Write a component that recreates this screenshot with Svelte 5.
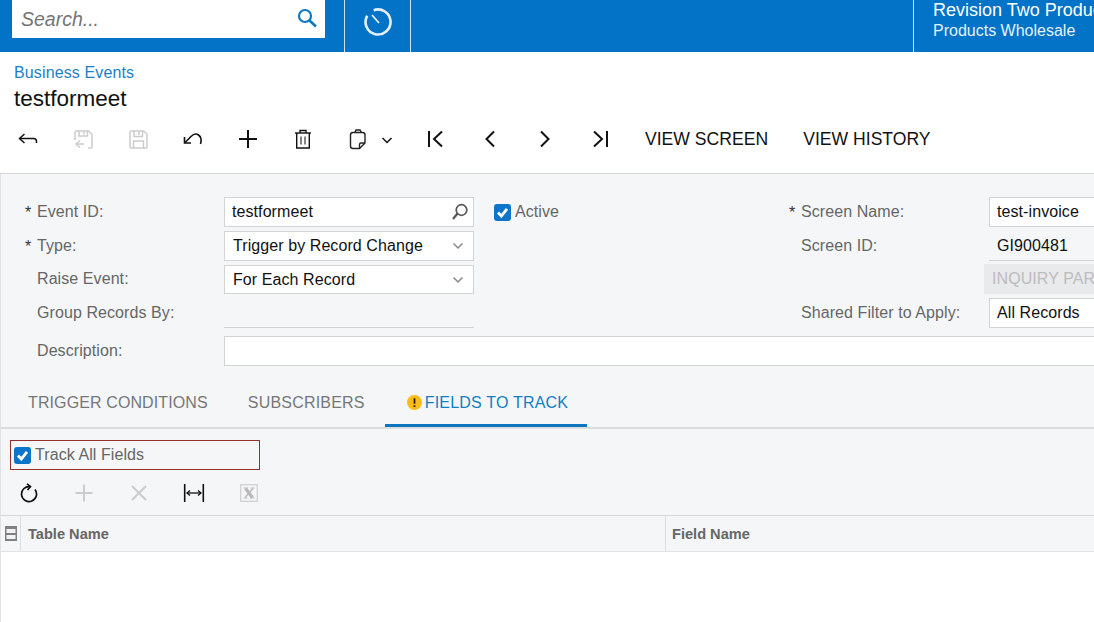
<script>
  const tabs = [
    { label: 'TRIGGER CONDITIONS' },
    { label: 'SUBSCRIBERS' },
    { label: 'FIELDS TO TRACK', active: true }
  ];
</script>

<div class="page">
  <header class="topbar">
    <div class="search">
      <span class="search-text">Search...</span>
      <svg class="search-icon" width="22" height="22" viewBox="0 0 22 22" fill="none" stroke="#0b78c2" stroke-width="2.2"><circle cx="9" cy="9" r="6"/><path d="M13.5 13.5L20 19.5" stroke-width="2.6"/></svg>
    </div>
    <div class="history">
      <svg width="30" height="30" viewBox="0 0 30 30" fill="none" stroke="#e6f1fa" stroke-width="2.6"><path d="M10.7 3.25A12.5 12.5 0 1 1 4.2 8.75"/><path d="M9 8L16 16" stroke-width="1.8"/></svg>
    </div>
    <div class="spacer"></div>
    <div class="company">
      <div class="company-a">Revision Two Products</div>
      <div class="company-b">Products Wholesale</div>
    </div>
  </header>

  <div class="titles">
    <a class="crumb" href="#top">Business Events</a>
    <div class="title">testformeet</div>
  </div>

  <div class="toolbar">
    <span class="tool"><svg width="22" height="22" viewBox="0 0 22 22" fill="none" stroke="#111" stroke-width="1.5"><path d="M7.5 6L2.5 10.5L7.5 15"/><path d="M3 10.5H16.5Q19.5 10.5 19.5 13.5V15"/></svg></span>
    <span class="tool"><svg width="22" height="22" viewBox="0 0 22 22" fill="none" stroke="#ccc" stroke-width="1.5"><path d="M3 12V5Q3 3 5 3H16.5L20 6V19Q20 20 19 20H16"/><path d="M7 3V8H15.5V3"/><path d="M12 4V6.500"/><path d="M8 12.500L4 16L8 19.500"/><path d="M4.500 16H12"/></svg></span>
    <span class="tool"><svg width="22" height="22" viewBox="0 0 22 22" fill="none" stroke="#ccc" stroke-width="1.5"><path d="M4 3H16.5L20 6V19Q20 20 19 20H4Q3 20 3 19V4Q3 3 4 3Z"/><path d="M7 3V8.500H15.500V3"/><path d="M12 4V7"/><path d="M6.500 20V13H16.500V20"/></svg></span>
    <span class="tool"><svg width="22" height="22" viewBox="0 0 22 22" fill="none" stroke="#111" stroke-width="1.6"><path d="M2.500 9V15H9"/><path d="M3 14.500L9 8.500Q13 4.500 16.500 7Q20.500 10 18.500 16"/></svg></span>
    <span class="tool"><svg width="22" height="22" viewBox="0 0 22 22" fill="none" stroke="#111" stroke-width="2"><path d="M11 2V20M2 11H20"/></svg></span>
    <span class="tool"><svg width="22" height="22" viewBox="0 0 22 22" fill="none" stroke="#111" stroke-width="1.4"><path d="M3 5H19"/><path d="M8 5V2.500H14V5"/><path d="M4.700 5V20H17.300V5"/><path d="M9 8.500V16.500M13 8.500V16.500" stroke="#666" stroke-width="1.6"/></svg></span>
    <span class="tool"><svg width="22" height="22" viewBox="0 0 22 22" fill="none" stroke="#222" stroke-width="1.4"><path d="M8 4.500L9 2H13L14.500 4.500"/><path d="M6 4.500H15.500Q18 4.500 18 7V15L12.500 20.500H6Q3.500 20.500 3.500 18V7Q3.500 4.500 6 4.500Z"/><path d="M18 15H14Q12.500 15 12.500 16.500V20.500"/></svg></span>
    <span class="chev"><svg width="12" height="12" viewBox="0 0 12 12" fill="none" stroke="#111" stroke-width="1.5"><path d="M1.500 4L6 8.500L10.500 4"/></svg></span>
    <span class="tool first"><svg width="22" height="22" viewBox="0 0 22 22" fill="none" stroke="#111" stroke-width="2"><path d="M5 3V19"/><path d="M18 3.500L10 11L18 18.500"/></svg></span>
    <span class="tool"><svg width="22" height="22" viewBox="0 0 22 22" fill="none" stroke="#111" stroke-width="2"><path d="M15 3.500L7.500 11L15 18.500"/></svg></span>
    <span class="tool"><svg width="22" height="22" viewBox="0 0 22 22" fill="none" stroke="#111" stroke-width="2"><path d="M7 3.500L14.500 11L7 18.500"/></svg></span>
    <span class="tool"><svg width="22" height="22" viewBox="0 0 22 22" fill="none" stroke="#111" stroke-width="2"><path d="M18 3V19"/><path d="M5 3.500L13 11L5 18.500"/></svg></span>
    <span class="text-btn screen">VIEW SCREEN</span>
    <span class="text-btn">VIEW HISTORY</span>
  </div>

  <main class="panel">
    <section class="form">
      <div class="label req r1">Event ID:</div>
      <div class="field box r1 lookup">testformeet
        <svg width="18" height="18" viewBox="0 0 18 18" fill="none" stroke="#555" stroke-width="1.7"><circle cx="11.500" cy="7" r="5.300"/><path d="M7.500 10.500L3 16" stroke-width="2.200"/></svg>
      </div>
      <div class="check r1"><span class="box-check"><svg width="17" height="17" viewBox="0 0 17 17" fill="none" stroke="#fff" stroke-width="2.800"><path d="M4 8.500L7.300 12L13 4.800"/></svg></span>Active</div>
      <div class="label req r1 right-label">Screen Name:</div>
      <div class="field box r1 right-field">test-invoice</div>

      <div class="label req r2">Type:</div>
      <div class="field box r2">Trigger by Record Change
        <svg width="12" height="12" viewBox="0 0 12 12" fill="none" stroke="#888" stroke-width="1.500"><path d="M1.500 3.500L6 8L10.500 3.500"/></svg>
      </div>
      <div class="label r2 right-label">Screen ID:</div>
      <div class="field line r2 right-field">GI900481</div>

      <div class="label r3">Raise Event:</div>
      <div class="field box r3">For Each Record
        <svg width="12" height="12" viewBox="0 0 12 12" fill="none" stroke="#888" stroke-width="1.500"><path d="M1.500 3.500L6 8L10.500 3.500"/></svg>
      </div>
      <div class="inquiry r3">INQUIRY PARAMETERS</div>

      <div class="label r4">Group Records By:</div>
      <div class="field line r4"></div>
      <div class="label r4 right-label">Shared Filter to Apply:</div>
      <div class="field box r4 right-field">All Records</div>

      <div class="label r5">Description:</div>
      <div class="field box r5 desc"></div>
    </section>

    <nav class="tabs">
      {#each tabs as tab}
        <div class="tab" class:active={tab.active}>
          {#if tab.active}
            <svg width="15" height="15" viewBox="0 0 15 15"><circle cx="7.500" cy="7.500" r="7.500" fill="#fbbc13"/><path d="M7.500 3.200V8.800M7.500 10.200V12" stroke="#222" stroke-width="1.800"/></svg>
          {/if}
          {tab.label}
        </div>
      {/each}
    </nav>

    <div class="track">
      <span class="box-check"><svg width="17" height="17" viewBox="0 0 17 17" fill="none" stroke="#fff" stroke-width="2.800"><path d="M4 8.500L7.300 12L13 4.800"/></svg></span>
      Track All Fields
    </div>

    <div class="grid-tools">
      <span class="tool"><svg width="20" height="20" viewBox="0 0 20 20" fill="none" stroke="#111" stroke-width="1.700"><path d="M11 3.600A7.500 7.500 0 1 0 16 6.500"/><path d="M8 0.800L11.500 3.600L8.500 7"/></svg></span>
      <span class="tool"><svg width="20" height="20" viewBox="0 0 20 20" fill="none" stroke="#ccc" stroke-width="2"><path d="M10 1.500V18.500M1.500 10H18.500"/></svg></span>
      <span class="tool"><svg width="20" height="20" viewBox="0 0 20 20" fill="none" stroke="#ccc" stroke-width="2"><path d="M3 3L17 17M17 3L3 17"/></svg></span>
      <span class="tool"><svg width="22" height="20" viewBox="0 0 22 20" fill="none" stroke="#111"><path d="M1.700 1V19M20.300 1V19" stroke-width="1.600"/><path d="M4 10H18" stroke-width="1.300"/><path d="M7 7.500L4 10L7 12.500M15 7.500L18 10L15 12.500" stroke-width="1.300"/></svg></span>
      <span class="tool"><svg width="20" height="20" viewBox="0 0 20 20" fill="none" stroke="#d0d0d0" stroke-width="1.300"><rect x="1.700" y="1.700" width="16.600" height="16.600"/><path d="M6.500 5.500L13.500 14.500" stroke="#b9b9b9" stroke-width="3.400"/><path d="M14 5.500L6 14.500" stroke="#b9b9b9" stroke-width="1.500"/><path d="M4.500 5H9M11.500 5H15.500M4.500 15H8.500M11 15H15.500" stroke="#b9b9b9" stroke-width="1.200"/></svg></span>
    </div>

    <div class="grid-head">
      <div class="col-icon"><svg width="12" height="15" viewBox="0 0 12 15"><rect width="12" height="15" fill="#808080"/><rect x="1.500" y="3" width="9" height="4" fill="#f0f2f5"/><rect x="1.500" y="9" width="9" height="4" fill="#f0f2f5"/></svg></div>
      <div class="col col-a">Table Name</div>
      <div class="col">Field Name</div>
    </div>
    <div class="grid-body"></div>
  </main>
</div>

<style>
  :global(body) { margin: 0; background: #fff; overflow: hidden; }
  .page {
    width: 1094px; height: 622px; overflow: hidden;
    font-family: "Liberation Sans", Arial, sans-serif; font-size: 16px;
    display: flex; flex-direction: column;
  }
  .topbar { flex: 0 0 52px; background: #0273c6; display: flex; color: #fff; }
  .search {
    flex: 0 0 313px; height: 38px; margin-left: 12px; background: #fff;
    display: flex; align-items: center; justify-content: space-between;
    padding: 0 7px 0 9px; box-sizing: border-box;
  }
  .search-text { font-style: italic; font-size: 19.500px; color: #757575; }
  .search-icon { margin-bottom: 2px; }
  .history {
    flex: 0 0 65px; margin-left: 19px;
    border-left: 1px solid #cfe3f3; border-right: 1px solid #cfe3f3;
    display: flex; align-items: center; justify-content: center; padding-bottom: 9px;
    box-sizing: content-box; height: 43px;
  }
  .spacer { flex: 0 0 502px; }
  .company {
    border-left: 1px solid #cfe3f3; padding-left: 19px; white-space: nowrap;
    flex: 1 0 auto;
  }
  .company-a { font-size: 18px; line-height: 20px; }
  .company-b { font-size: 16px; line-height: 20px; margin-top: 1px; color: #e6f1fa; }
  .titles { padding: 12px 14px 0; flex: 0 0 62px; box-sizing: border-box; }
  .crumb { display: block; color: #1a82c4; font-size: 16px; letter-spacing: 0.13px; line-height: 18px; text-decoration: none; }
  .title { color: #111; font-size: 22.500px; line-height: 30px; margin-top: 2px; }
  .toolbar { flex: 0 0 59px; box-sizing: border-box; display: flex; align-items: center; padding-bottom: 9px; }
  .tool { display: flex; justify-content: center; align-items: center; flex: 0 0 55px; }
  .chev { flex: 0 0 12px; margin-left: -4px; display: flex; margin-top: 1px; }
  .first { margin-left: 14px; }
  .text-btn { color: #111; font-size: 17.600px; white-space: nowrap; margin-left: 35px; }
  .text-btn.screen { margin-left: 18px; }

  .panel {
    flex: 1; background: #f4f6f8; border-top: 1px solid #d4d4d4; border-left: 1px solid #e2e2e2;
    display: flex; flex-direction: column; min-width: 0;
  }
  .form {
    display: grid; width: 1400px; letter-spacing: 0.08px;
    grid-template-columns: 223px 250px 292px 223px 412px;
    grid-template-rows: 53px 34px 33px 34px 38px;
    color: #555;
  }
  .r1 { grid-row: 1; } .r2 { grid-row: 2; } .r3 { grid-row: 3; } .r4 { grid-row: 4; } .r5 { grid-row: 5; }
  .label {
    grid-column: 1; align-self: end; line-height: 30px; padding-left: 36px; position: relative; color: #666;
    white-space: nowrap;
  }
  .req::before { content: "*"; position: absolute; left: 24px; top: 1px; color: #333; }
  .right-label { grid-column: 4; padding-left: 35px; }
  .right-label.req::before { left: 23px; }
  .field {
    grid-column: 2; align-self: end; box-sizing: border-box; height: 30px; color: #111;
    display: flex; align-items: center; justify-content: space-between; padding: 0 9px 0 8px;
  }
  .field.r3 { height: 29px; }
  .lookup { padding: 0 5px 0 7px; }
  .box { background: #fff; border: 1px solid #d3d3d3; }
  .line { border-bottom: 1px solid #d3d3d3; }
  .right-field { grid-column: 5; }
  .right-field.box { padding-left: 7px; }
  .desc { grid-column: 2 / 6; }
  .check { display: flex; align-items: center; gap: 4px; height: 30px; align-self: end; color: #666; grid-column: 3; margin-left: 20px; white-space: nowrap; }
  .box-check {
    width: 17px; height: 17px; background: #0c74c9; border-radius: 3px; display: inline-flex; flex: none;
  }
  .inquiry {
    grid-column: 5; align-self: end; margin-left: -5px; background: #e9eaec; color: #bcbcbc;
    display: flex; align-items: center; padding-left: 8px; white-space: nowrap; height: 30px;
  }
  .tabs {
    display: flex; flex: 0 0 62px; border-bottom: 2px solid #dcdcdc; box-sizing: border-box;
    padding: 20px 0 0 7px; letter-spacing: 0.11px;
  }
  .tab {
    display: flex; gap: 3px; color: #777; align-self: flex-start;
    height: 41px; box-sizing: border-box; white-space: nowrap; flex: none;
    padding: 8px 20px 0; line-height: 18px; align-items: flex-start;
  }
  .tab:nth-child(2) { letter-spacing: 0.2px; }
  .tab.active { color: #1080c4; border-bottom: 3px solid #0d76bf; padding-left: 22px; padding-right: 19px; letter-spacing: 0.2px; }
  .tab.active svg { margin-top: 1px; }
  .track {
    margin: 11px 0 0 9px; width: 250px; height: 30px; box-sizing: border-box; border: 1px solid #96302f;
    display: flex; align-items: center; gap: 4px; padding-left: 3px; color: #666; flex: none; letter-spacing: 0.08px;
  }
  .grid-tools { flex: 0 0 45px; display: flex; align-items: center; }
  .grid-head {
    flex: 0 0 37px; display: flex; border-top: 1px solid #d6d6d6; border-bottom: 1px solid #e2e2e2;
    box-sizing: border-box; font-weight: 700; font-size: 14.600px; color: #666;
  }
  .col-icon { flex: 0 0 20px; box-sizing: border-box; display: flex; align-items: center; justify-content: center; border-right: 1px solid #dedede; }
  .col { display: flex; align-items: center; padding-left: 6px; flex: 1; }
  .col-a { flex: 0 0 645px; box-sizing: border-box; border-right: 1px solid #dedede; padding-left: 7px; }
  .grid-body { flex: 1; background: #fff; }
</style>
